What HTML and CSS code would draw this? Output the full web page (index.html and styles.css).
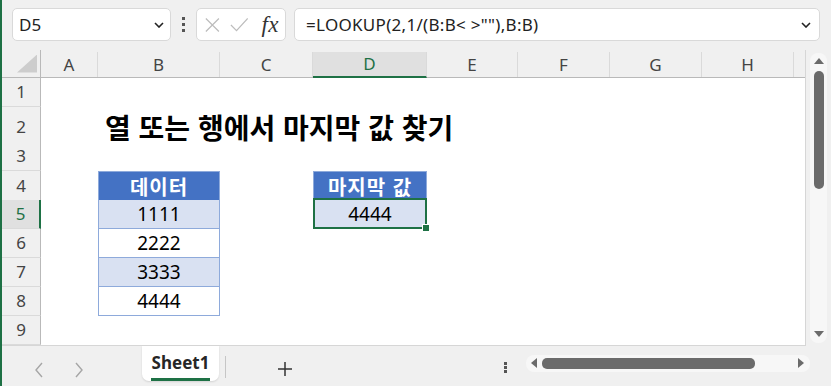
FILE: index.html
```html
<!DOCTYPE html>
<html lang="ko">
<head>
    <meta charset="UTF-8">
    <title>열 또는 행에서 마지막 값 찾기</title>
    <link rel="stylesheet" href="styles.css">
</head>
<body>
<div class="app">
    <!-- Name box + formula bar -->
    <div class="toolbar">
        <div class="namebox">
            <span>D5</span>
            <svg class="chev" width="10" height="6" viewBox="0 0 10 6"><path d="M1 1 L5 5 L9 1" fill="none" stroke="#222" stroke-width="1.6"/></svg>
        </div>
        <div class="kebab"><i></i><i></i><i></i></div>
        <div class="fxbox">
            <svg width="18" height="18" viewBox="0 0 18 18"><path d="M2 2 L16 16 M16 2 L2 16" stroke="#bcbcbc" stroke-width="1.3"/></svg>
            <svg width="20" height="18" viewBox="0 0 20 18"><path d="M1 9 L7 15 L19 2" fill="none" stroke="#bcbcbc" stroke-width="1.3"/></svg>
            <span class="fx">fx</span>
        </div>
        <div class="formula">
            <span>=LOOKUP(2,1/(B:B&lt; &gt;""),B:B)</span>
            <svg class="chev" width="10" height="6" viewBox="0 0 10 6"><path d="M1 1 L5 5 L9 1" fill="none" stroke="#222" stroke-width="1.6"/></svg>
        </div>
    </div>

    <div class="main">
        <div class="grid">
            <div class="row head">
                <div class="corner"><div class="tri"></div></div>
                <div class="ch">A</div>
                <div class="ch">B</div>
                <div class="ch">C</div>
                <div class="ch sel">D</div>
                <div class="ch">E</div>
                <div class="ch">F</div>
                <div class="ch">G</div>
                <div class="ch">H</div>
                <div class="ch end"></div>
            </div>
            <div class="row">
                <div class="rh">1</div>
            </div>
            <div class="row tall">
                <div class="rh">2</div>
                <div></div>
                <div class="title">열 또는 행에서 마지막 값 찾기</div>
            </div>
            <div class="row">
                <div class="rh">3</div>
            </div>
            <div class="row">
                <div class="rh">4</div>
                <div></div>
                <div class="cell th">데이터</div>
                <div></div>
                <div class="cell th">마지막 값</div>
            </div>
            <div class="row">
                <div class="rh sel">5</div>
                <div></div>
                <div class="cell band">1111</div>
                <div></div>
                <div class="cell band active">4444<span class="handle"></span></div>
            </div>
            <div class="row">
                <div class="rh">6</div>
                <div></div>
                <div class="cell">2222</div>
            </div>
            <div class="row">
                <div class="rh">7</div>
                <div></div>
                <div class="cell band">3333</div>
            </div>
            <div class="row">
                <div class="rh">8</div>
                <div></div>
                <div class="cell">4444</div>
            </div>
            <div class="row">
                <div class="rh">9</div>
            </div>
        </div>

        <div class="vscroll">
            <div class="vtrack">
                <span class="arr up"></span>
                <div class="vthumb"></div>
                <span class="arr down"></span>
            </div>
        </div>
    </div>

    <!-- Sheet tabs -->
    <div class="tabbar">
        <div class="nav">
            <svg width="10" height="16" viewBox="0 0 10 16"><path d="M8 1 L2 8 L8 15" fill="none" stroke="#a6a6a6" stroke-width="1.4"/></svg>
            <svg width="10" height="16" viewBox="0 0 10 16"><path d="M2 1 L8 8 L2 15" fill="none" stroke="#a6a6a6" stroke-width="1.4"/></svg>
        </div>
        <div class="tab"><span>Sheet1</span></div>
        <div class="sep"></div>
        <div class="plus">
            <svg width="16" height="16" viewBox="0 0 16 16"><path d="M8 1 V15 M1 8 H15" stroke="#333" stroke-width="1.5"/></svg>
        </div>
        <div class="spacer"></div>
        <div class="kebab small"><i></i><i></i><i></i></div>
        <div class="htrack">
            <span class="arr left"></span>
            <div class="hthumb"></div>
            <span class="arr right"></span>
        </div>
    </div>
</div>
</body>
</html>
```

FILE: styles.css
```css
body {
    margin: 0;
    padding: 0;
    background: #f0f0f0;
    font-family: 'Noto Sans', 'Noto Sans CJK KR', sans-serif;
}
.app {
    width: 831px;
    height: 386px;
    display: flex;
    flex-direction: column;
    border-left: 2px solid #1e7145;
    box-sizing: border-box;
    background: #f0f0f0;
    overflow: hidden;
}

/* toolbar */
.toolbar {
    height: 50px;
    display: flex;
    align-items: flex-start;
    padding: 8px 11px 0 10px;
    box-sizing: border-box;
}
.namebox, .fxbox, .formula {
    height: 33px;
    background: #fff;
    border: 1px solid #d9d9d9;
    border-radius: 5px;
    box-sizing: border-box;
    display: flex;
    align-items: center;
}
.namebox {
    width: 159px;
    padding: 0 6px 0 6px;
    justify-content: space-between;
    font-size: 17px;
    color: #222;
}
.kebab {
    width: 4px;
    margin: 9px 10px 0 11px;
    display: flex;
    flex-direction: column;
    gap: 3px;
}
.kebab i {
    display: block;
    width: 3px;
    height: 3px;
    background: #555;
}
.fxbox {
    width: 90px;
    padding: 0 6px 0 7px;
    gap: 9px;
}
.fx {
    font-family: 'Liberation Serif', serif;
    font-style: italic;
    font-size: 23px;
    color: #333;
    margin-left: 4px;
    letter-spacing: 0.5px;
    line-height: 1;
}
.formula {
    flex: 1;
    margin-left: 8px;
    padding: 0 8px 0 11px;
    justify-content: space-between;
    font-size: 17px;
    letter-spacing: 0.3px;
    color: #222;
}

/* grid */
.main {
    flex: 1;
    display: flex;
}
.grid {
    width: 804px;
    background: #fff;
    border-right: 1px solid #d6d6d6;
    border-bottom: 1px solid #d6d6d6;
}
.row {
    display: grid;
    grid-template-columns: 39px 57px 122px 93px 114px 91px 92px 92px 92px 11px;
    height: 29px;
}
.row.tall {
    height: 35px;
}
.row.head {
    height: 28px;
    background: #f0f0f0;
    border-bottom: 1px solid #b9b9b9;
    box-sizing: border-box;
}
.corner {
    display: flex;
    justify-content: flex-end;
    align-items: flex-end;
    padding: 0 3px 4px 0;
    border-right: 1px solid #b9b9b9;
}
.tri {
    width: 20px;
    height: 18px;
    background: #cdcdcd;
    clip-path: polygon(100% 0, 100% 100%, 0 100%);
}
.ch {
    display: flex;
    align-items: center;
    justify-content: center;
    font-size: 17px;
    color: #444;
    border-right: 1px solid #dadada;
    margin-top: 2px;
}
.ch.end {
    border-right: none;
}
.ch.sel {
    background: #e0e0e0;
    color: #1e7145;
    border-bottom: 2px solid #1e7145;
    margin-bottom: -1px;
}
.rh {
    display: flex;
    align-items: center;
    justify-content: center;
    background: #f0f0f0;
    border-right: 1px solid #b9b9b9;
    border-bottom: 1px solid #dadada;
    font-size: 17px;
    color: #444;
}
.rh.sel {
    background: #e0e0e0;
    color: #1e7145;
    border-right: 2px solid #1e7145;
}
.title {
    grid-column: 3 / -1;
    display: flex;
    align-items: center;
    padding-left: 7px;
    white-space: nowrap;
    font-family: 'Noto Sans CJK KR', sans-serif;
    font-weight: 700;
    font-size: 28px;
    color: #000;
}
.cell {
    display: flex;
    align-items: center;
    justify-content: center;
    font-family: 'Noto Sans', 'Noto Sans CJK KR', sans-serif;
    font-size: 19px;
    color: #000;
    border-left: 1px solid #8eaadb;
    border-right: 1px solid #8eaadb;
    border-bottom: 1px solid #8eaadb;
    box-sizing: border-box;
}
.cell.th {
    background: #4472c4;
    color: #fff;
    font-family: 'Noto Sans CJK KR', sans-serif;
    font-weight: 700;
    font-size: 20px;
    letter-spacing: 1px;
    border-top: 1px solid #8eaadb;
}
.cell.band {
    background: #d9e1f2;
}
.cell.active {
    position: relative;
}
.cell.active::after {
    content: "";
    position: absolute;
    top: -2px;
    left: -1px;
    right: -1px;
    bottom: -1px;
    border: 2px solid #1e7145;
}
.handle {
    position: absolute;
    right: -4px;
    bottom: -4px;
    width: 6px;
    height: 6px;
    background: #1e7145;
    border: 1px solid #fff;
    z-index: 2;
}

/* scroll bars */
.vscroll {
    width: 25px;
    padding: 3px 4px 3px 4px;
    box-sizing: border-box;
}
.vtrack {
    height: 100%;
    background: #f7f7f7;
    border-radius: 8px;
    display: flex;
    flex-direction: column;
    align-items: center;
    padding-top: 5px;
    box-sizing: border-box;
}
.arr {
    width: 0;
    height: 0;
    border: 5px solid transparent;
}
.arr.up {
    border-bottom: 6px solid #6b6b6b;
    border-top: none;
}
.arr.down {
    border-top: 6px solid #6b6b6b;
    border-bottom: none;
    margin-top: auto;
    margin-bottom: 6px;
}
.vthumb {
    width: 10px;
    height: 118px;
    margin-top: 7px;
    background: #6b6b6b;
    border-radius: 5px;
}
.tabbar {
    height: 41px;
    display: flex;
    align-items: flex-start;
    box-sizing: border-box;
}
.nav {
    width: 140px;
    display: flex;
    gap: 30px;
    padding: 16px 0 0 32px;
    box-sizing: border-box;
}
.tab {
    width: 77px;
    height: 35px;
    background: #fff;
    border-radius: 0 0 7px 7px;
    box-shadow: 0 1px 2px rgba(0,0,0,0.12);
    display: flex;
    justify-content: center;
    padding-top: 5px;
    box-sizing: border-box;
}
.tab span {
    font-family: 'Noto Sans', sans-serif;
    font-weight: 700;
    font-size: 17px;
    color: #262626;
    border-bottom: 3px solid #1e7145;
    height: 27px;
    line-height: 24px;
    padding: 0 1px;
}
.sep {
    width: 1px;
    height: 22px;
    background: #c6c6c6;
    margin: 10px 0 0 6px;
}
.plus {
    padding: 14px 0 0 51px;
}
.spacer {
    flex: 1;
}
.kebab.small {
    margin: 16px 18px 0 0;
    gap: 1px;
}
.kebab.small i {
    width: 3px;
    height: 3px;
}
.htrack {
    width: 284px;
    height: 17px;
    margin: 9px 21px 0 0;
    background: #f7f7f7;
    border-radius: 8px;
    display: flex;
    align-items: center;
    padding: 0 6px 0 5px;
    box-sizing: border-box;
}
.arr.left {
    border-right: 6px solid #6b6b6b;
    border-left: none;
}
.arr.right {
    border-left: 6px solid #6b6b6b;
    border-right: none;
    margin-left: auto;
}
.hthumb {
    width: 213px;
    height: 11px;
    margin-left: 5px;
    background: #6b6b6b;
    border-radius: 5px;
}
```
